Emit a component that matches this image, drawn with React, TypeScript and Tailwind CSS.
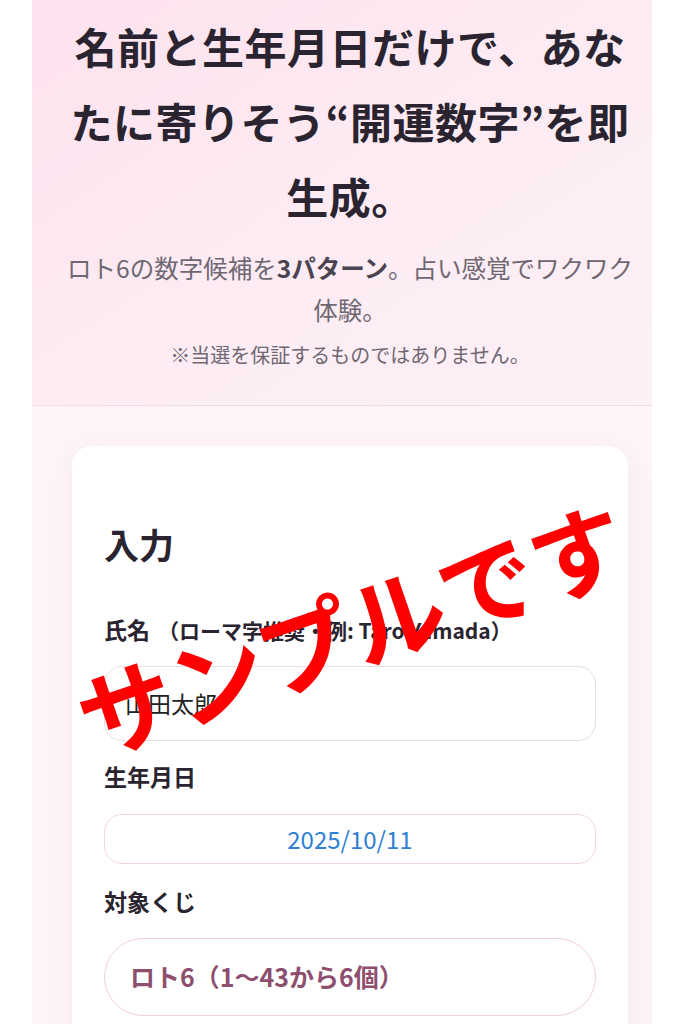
export default function App() {
  return (
    <div
      className="relative min-h-screen overflow-hidden bg-white text-[#2a2430]"
      style={{ fontFamily: '"Noto Sans CJK JP", "Noto Sans", sans-serif' }}
    >
      <div className="mx-8">
        {/* Hero */}
        <header className="border-b border-[#f5d9e4] bg-gradient-to-br from-[#fde2ee] via-[#fdebf3] to-[#fdf1f6] pl-7 pr-3 pt-2 pb-[35px] text-center">
          <h1 className="text-[42px] font-bold leading-[75px] tracking-[0.5px]">
            名前と生年月日だけで、あなたに寄りそう“開運数字”を即生成。
          </h1>
          <p className="mt-[14px] text-[24.5px] leading-[42px] text-[#6f6873]">
            ロト6の数字候補を<span className="font-bold text-[#4a4450]">3パターン</span>。占い感覚でワクワク体験。
          </p>
          <p className="mt-[9px] text-[20px] leading-[30px] text-[#6f6873]">
            ※当選を保証するものではありません。
          </p>
        </header>

        {/* Form area */}
        <main className="bg-[#fdf5f8] pl-10 pr-6 pt-10 pb-10">
          <section className="rounded-[20px] bg-white px-8 pt-[76px] pb-10 shadow-[0_6px_28px_rgba(214,150,178,0.14)]">
            <h2 className="text-[35px] font-bold leading-[44px]">入力</h2>

            <label className="mt-[49px] block text-[23px] font-semibold leading-[28px]">
              氏名
              <span className="ml-2 text-[21px]">（ローマ字推奨・例: Taro Yamada）</span>
            </label>
            <div className="mt-[22px] flex h-[75px] items-center rounded-[18px] border-[1.5px] border-[#ecdbe3] px-5 text-[23px] text-[#222]">
              山田太郎
            </div>

            <label className="mt-[21px] block text-[23px] font-semibold leading-[28px]">生年月日</label>
            <div className="mt-6 flex h-[50px] items-center justify-center rounded-[18px] border-[1.5px] border-[#efd6e0] text-[24px] text-[#2f7fd6]">
              2025/10/11
            </div>

            <label className="mt-[23px] block text-[23px] font-semibold leading-[28px]">対象くじ</label>
            <div className="mt-[23px] flex h-[78px] items-center rounded-[39px] border-[1.5px] border-[#f3cedc] pl-[25px] text-[25px] font-bold text-[#8e4f6e]">
              ロト6（1〜43から6個）
            </div>
          </section>
        </main>
      </div>

      {/* Sample watermark */}
      <div className="pointer-events-none absolute left-[351px] top-[627px] -translate-x-1/2 -translate-y-1/2 rotate-[-19deg] whitespace-nowrap text-[96px] font-bold leading-none text-[#ff0000]">
        サンプルです
      </div>
    </div>
  );
}
